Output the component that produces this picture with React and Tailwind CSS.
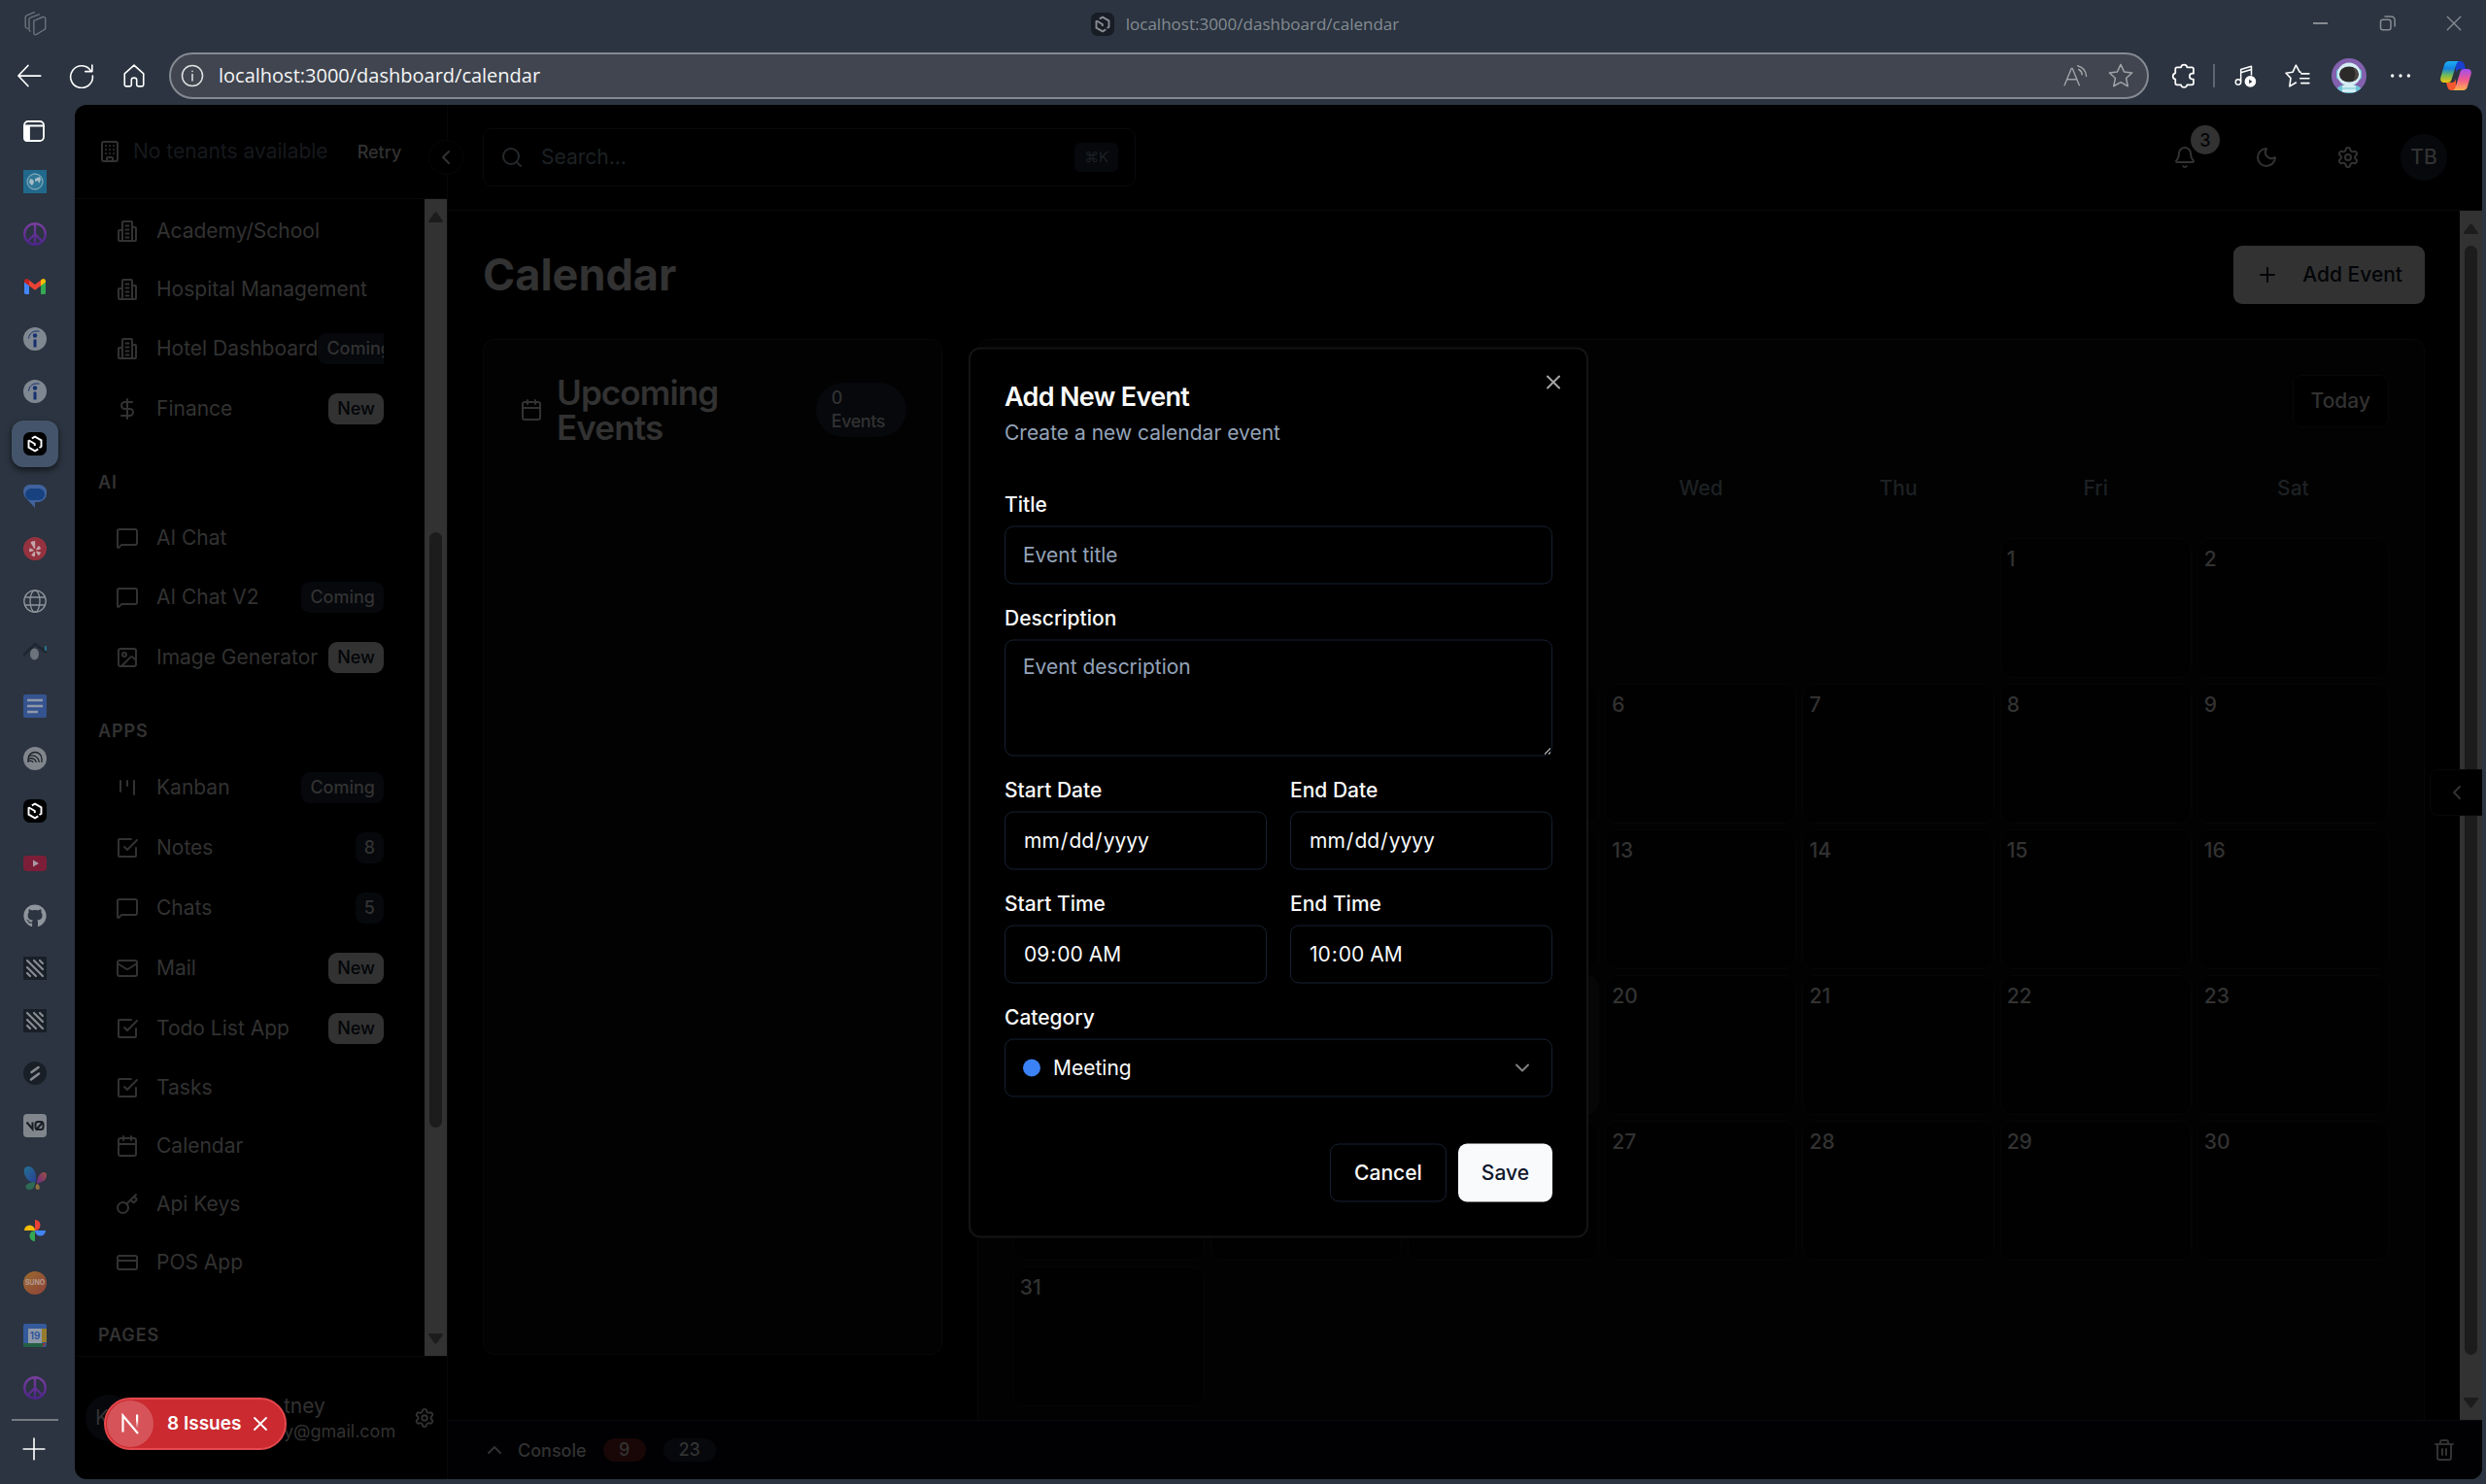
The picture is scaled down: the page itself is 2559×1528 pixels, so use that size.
import React from "react";
import {
  Building, Building2, DollarSign, MessageSquare, Image as ImageIcon, Mail, Calendar, Key, CreditCard,
  Bell, Moon, Settings, Search, ChevronLeft, ChevronDown, ChevronUp, Plus, X, Trash2,
} from "lucide-react";
import { FaYelp, FaGithub } from "react-icons/fa";

/* ---------- browser icons ---------- */

const Line = ({ size = 24, w = 1.5, children, className = "" }) => (
  <svg width={size} height={size} viewBox="0 0 24 24" fill="none" stroke="currentColor" strokeWidth={w} strokeLinecap="round" strokeLinejoin="round" className={className} aria-hidden="true">
    {children}
  </svg>
);

const HexLogo = ({ dim }) => (
  <svg width="24" height="24" viewBox="0 0 24 24" aria-hidden="true">
    <rect width="24" height="24" rx="6.500" fill={dim ? "#171d25" : "#000"} />
    <g fill="none" stroke={dim ? "#878c93" : "#fff"} strokeWidth="1.900">
      <path d="M5.500 8.300v7.300l6.500 3.700 3.300-1.900" />
      <path d="M5.500 8.300l6.300 3.700v2" />
      <path d="M8.800 6.400L12 4.700l6.500 3.700v6.400l-2 1.200" />
    </g>
  </svg>
);

const Peace = () => (
  <svg width="24" height="24" viewBox="0 0 24 24" aria-hidden="true">
    <defs>
      <linearGradient id="peace" gradientUnits="userSpaceOnUse" x1="0" y1="0" x2="0" y2="24">
        <stop offset="0" stopColor="#7a3f9e" />
        <stop offset="1" stopColor="#4a2488" />
      </linearGradient>
    </defs>
    <g fill="none" stroke="url(#peace)" strokeWidth="2.400">
      <circle cx="12" cy="12" r="10.800" />
      <path d="M12 1v22M12 12l-7.600 7.600M12 12l7.600 7.600" />
    </g>
  </svg>
);

const WebTile = () => (
  <svg width="24" height="24" viewBox="0 0 24 24" aria-hidden="true">
    <rect width="24" height="24" fill="#20698d" />
    <circle cx="12" cy="12" r="8" fill="#2d7797" stroke="#7ba2b4" strokeWidth="1.300" />
    <path d="M7 9l3 1 1 3-2 3-3-3zM12 9l5-2 1 3-2 4-1-3-3 1z" fill="#a5bcc6" />
  </svg>
);

const Gmail = () => (
  <svg width="24" height="24" viewBox="0 0 24 24" aria-hidden="true">
    <path d="M1 7v11.500A1.500 1.500 0 0 0 2.500 20H6V10z" fill="#4285f4" />
    <path d="M23 7v11.500a1.500 1.500 0 0 1-1.500 1.500H18V10z" fill="#34a853" />
    <path d="M6 5.500L12 10l6-4.500v5.800l-6 4.500-6-4.500z" fill="#ea4335" />
    <path d="M1 6.500C1 4 3.500 3.200 5.200 4.800L6 5.500v5.800L1 7.600z" fill="#c5221f" />
    <path d="M23 6.500c0-2.500-2.500-3.300-4.200-1.700l-.8.7v5.800l5-3.700z" fill="#fbbc04" />
  </svg>
);

const Indeed = () => (
  <svg width="24" height="24" viewBox="0 0 24 24" aria-hidden="true">
    <circle cx="12" cy="12" r="12" fill="#7f8791" />
    <circle cx="12" cy="8.500" r="2.200" fill="#14306e" />
    <rect x="10.500" y="12.500" width="3" height="8" rx="0.500" fill="#14306e" />
    <path d="M5.500 11.500C6 6.500 10 2.800 16.500 4.200" fill="none" stroke="#14306e" strokeWidth="1" />
  </svg>
);

const Messages = () => (
  <svg width="24" height="24" viewBox="0 0 24 24" aria-hidden="true">
    <path d="M7 0h9a8 8 0 0 1 8 9.500 9 9 0 0 1-9 8.500h-3v6L1.500 12.500C-1.500 7 .5 0 7 0z" fill="#41629d" />
    <rect x="2" y="4" width="20" height="12" rx="6" fill="#17427f" />
  </svg>
);

const Yelp = () => (
  <span className="flex size-6 items-center justify-center rounded-full bg-[#96323f] text-[#c3a5ab]">
    <FaYelp size={16} />
  </span>
);

const Globe = () => (
  <Line className="text-[#8f959c]" w={1.300}>
    <circle cx="12" cy="12" r="11.200" />
    <ellipse cx="12" cy="12" rx="5" ry="11.200" />
    <path d="M1.800 8h20.400M1.800 16h20.400" />
  </Line>
);

const Roof = () => (
  <svg width="24" height="24" viewBox="0 0 24 24" aria-hidden="true">
    <path d="M0 14L12 2l12 9" fill="none" stroke="#1e2731" strokeWidth="2.500" />
    <ellipse cx="11.500" cy="12.500" rx="4.500" ry="6" fill="#6c737b" />
    <rect x="22" y="4" width="2" height="5" fill="#28708a" />
  </svg>
);

const Docs = () => (
  <svg width="24" height="24" viewBox="0 0 24 24" aria-hidden="true">
    <rect width="24" height="24" rx="2" fill="#35538f" />
    <path d="M4 6h16M4 12h16M4 18h11" stroke="#9099a8" strokeWidth="2.600" />
  </svg>
);

const Arcs = () => (
  <svg width="24" height="24" viewBox="0 0 24 24" aria-hidden="true">
    <circle cx="12" cy="12" r="12" fill="#81868d" />
    <g fill="none" stroke="#1a2129" strokeWidth="1.300">
      <path d="M5 16v-3.500a7 7 0 0 1 14 0V16" />
      <path d="M5 9.800c6-2.500 11 1 11.200 6.200" />
      <path d="M5 12.300c4-1.500 8 .5 8.300 3.700" />
      <path d="M5 14.500c2.500-.5 4.500 0 5.200 1.500" />
    </g>
  </svg>
);

const YouTube = () => (
  <svg width="24" height="24" viewBox="0 0 24 24" aria-hidden="true">
    <rect y="4" width="24" height="16" rx="4" fill="#7d1e38" />
    <path d="M10 8.500v7l6-3.500z" fill="#a99aa5" />
  </svg>
);

const Stripes = () => (
  <svg width="24" height="24" viewBox="0 0 24 24" aria-hidden="true">
    <rect width="24" height="24" fill="#181f27" />
    <path d="M4 4l16 16M11 4l9 9M17 4l3 3M4 11l9 9M4 17l3 3" stroke="#878c93" strokeWidth="2.200" strokeLinecap="round" />
  </svg>
);

const Slashes = () => (
  <svg width="24" height="24" viewBox="0 0 24 24" aria-hidden="true">
    <circle cx="12" cy="12" r="12" fill="#181f27" />
    <path d="M8.500 11L15.500 6M8 18.500l8-6" stroke="#878c93" strokeWidth="2.600" strokeLinecap="round" />
  </svg>
);

const VZero = () => (
  <svg width="24" height="24" viewBox="0 0 24 24" aria-hidden="true">
    <rect width="24" height="24" rx="4" fill="#81868d" />
    <path d="M3.500 8.500l6 7v-7M13 16.500l7-8" fill="none" stroke="#171d25" strokeWidth="2" />
    <rect x="12.500" y="8" width="8" height="8" rx="2.500" fill="none" stroke="#171d25" strokeWidth="2" />
  </svg>
);

const Butterfly = () => (
  <svg width="24" height="24" viewBox="0 0 24 24" aria-hidden="true">
    <defs>
      <linearGradient id="wing" x1="0" y1="0" x2="1" y2="1">
        <stop offset="0" stopColor="#237396" />
        <stop offset="1" stopColor="#2a3f91" />
      </linearGradient>
      <linearGradient id="wing2" x1="1" y1="0" x2="0" y2="1">
        <stop offset="0" stopColor="#9a5043" />
        <stop offset="1" stopColor="#6c2a86" />
      </linearGradient>
    </defs>
    <path d="M5 0c6 0 9 7 8 16-6 1-9-2-11-6S0 0 5 0z" fill="url(#wing)" />
    <path d="M24 9c0 6-5 7-10 9 0-6 3-12 7-12 2 0 3 1 3 3z" fill="url(#wing2)" />
    <path d="M12 16c0 5-2 8-6 8s-4-4-3-5c2-2 6-3 9-3z" fill="#2f6a54" />
    <path d="M14 18c3 0 4 6 1 6s-3-4-1-6z" fill="#90703f" />
  </svg>
);

const Photos = () => (
  <svg width="24" height="24" viewBox="0 0 24 24" aria-hidden="true">
    <path d="M12 1a5.500 5.500 0 0 1 0 11z" fill="#ea4335" />
    <path d="M23 12a5.500 5.500 0 0 1-11 0z" fill="#4285f4" />
    <path d="M12 23a5.500 5.500 0 0 1 0-11z" fill="#34a853" />
    <path d="M1 12a5.500 5.500 0 0 1 11 0z" fill="#fbbc04" />
  </svg>
);

const Suno = () => (
  <span className="flex size-6 items-center justify-center rounded-full bg-linear-to-br from-[#9a6a2c] to-[#8d4139] font-['Inter',sans-serif] text-[7px] font-bold text-[#b39a92]">
    SUNO
  </span>
);

const GCal = () => (
  <svg width="24" height="24" viewBox="0 0 24 24" aria-hidden="true">
    <rect width="24" height="24" rx="2" fill="#345a9b" />
    <path d="M19 5h5v14h-5z" fill="#967b2d" />
    <path d="M0 20h20v4H2a2 2 0 0 1-2-2z" fill="#245f42" />
    <path d="M20 20h4l-4 4z" fill="#8e3733" />
    <rect x="5" y="5" width="14" height="15" fill="#8f99a7" />
    <text x="12" y="16" textAnchor="middle" fontSize="10" fontWeight="600" fontFamily="Inter, sans-serif" fill="#2a519b">19</text>
  </svg>
);

const TABS = [
  ["Web", WebTile], ["Peace", Peace], ["Gmail", Gmail], ["Indeed", Indeed], ["Indeed jobs", Indeed],
  ["Dashboard", HexLogo, true], ["Messages", Messages], ["Yelp", Yelp], ["Site", Globe], ["Home", Roof],
  ["Docs", Docs], ["Arcs", Arcs], ["Dashboard 2", HexLogo], ["YouTube", YouTube],
  ["GitHub", () => <FaGithub size={24} className="text-[#8f959c]" />],
  ["Stripes", Stripes], ["Stripes 2", Stripes], ["Slashes", Slashes], ["v0", VZero], ["Copilot designer", Butterfly],
  ["Photos", Photos], ["Suno", Suno], ["Google Calendar", GCal], ["Peace 2", Peace],
];

const Astronaut = () => (
  <svg width="36" height="36" viewBox="0 0 36 36" aria-hidden="true">
    <defs><clipPath id="ava"><circle cx="18" cy="18" r="18" /></clipPath></defs>
    <g clipPath="url(#ava)">
      <rect width="36" height="36" fill="#8361ae" />
      <path d="M4 36c0-6 5-9 14-9s14 3 14 9z" fill="#6cc5d6" />
      <rect x="5" y="11" width="26" height="11" rx="3" fill="#6cc5d6" />
      <circle cx="18" cy="16.500" r="12" fill="#d3edf2" />
      <ellipse cx="18" cy="16.500" rx="10" ry="8" fill="#2c2a29" />
      <path d="M22 9.500c7 2 7 12 0 14 3-4 3-10 0-14z" fill="#4b4643" />
      <rect x="11" y="28" width="14" height="7" rx="1" fill="#d3edf2" />
      <path d="M11 31h14" stroke="#6cc5d6" />
    </g>
  </svg>
);

const Copilot = () => (
  <svg width="34" height="32" viewBox="0 0 34 32" aria-hidden="true">
    <defs>
      <linearGradient id="cpA" x1="0" y1="0" x2="0" y2="1">
        <stop offset="0" stopColor="#1cb0f5" />
        <stop offset=".35" stopColor="#1583e0" />
        <stop offset=".65" stopColor="#6dbb5a" />
        <stop offset="1" stopColor="#f2c50c" />
      </linearGradient>
      <linearGradient id="cpB" x1="0" y1="0" x2="0" y2="1">
        <stop offset="0" stopColor="#a04ff0" />
        <stop offset=".5" stopColor="#f0588f" />
        <stop offset="1" stopColor="#ffb14d" />
      </linearGradient>
    </defs>
    <path d="M17 1h5c2 0 3 1.500 3.500 3l1.500 5h-5c-3 0-4 1-5 4z" fill="#1a3fd0" />
    <path d="M17 31h-5c-2 0-3-1.500-3.500-3L7 23h5c3 0 4-1 5-4z" fill="#f4582f" />
    <path d="M10 1h11c-2 0-3 1.500-3.500 3l-5 16c-.6 2-1.500 3-4 3H5c-3.500 0-4.500-2.500-3.500-6L5 5c1-3 2.500-4 5-4z" fill="url(#cpA)" />
    <path d="M24 31H13c2 0 3-1.500 3.500-3l5-16c.6-2 1.500-3 4-3H29c3.500 0 4.500 2.500 3.500 6L29 27c-1 3-2.500 4-5 4z" fill="url(#cpB)" />
  </svg>
);

const ToolButton = ({ label, className = "", children }) => (
  <button type="button" aria-label={label} className={`flex h-12 shrink-0 items-center justify-center ${className}`}>
    {children}
  </button>
);

function TitleBar() {
  return (
    <div className="flex h-12 shrink-0 items-center text-[#858b92]">
      <div className="flex w-[73px] justify-center">
        <Line size={26} w={1.300} className="text-[#6b737d]">
          <path d="M10 9.500l8.500-3.500q2.500-.5 2.500 2v8.500q0 1-1 1.500l-7.500 4.500q-2.500 1-2.500-1.500z" />
          <path d="M6.500 19.500q-1-.5-1-2V8.500q0-1.500 1.300-2L15 3.500M4 17q-2-.5-2-2V6.500Q2 5 3.300 4.500L10.500 1.500" />
        </Line>
      </div>
      <div className="flex flex-1 items-center justify-center gap-3 pt-[2px] pl-[136px]">
        <HexLogo dim />
        <span className="font-['Open_Sans',sans-serif] text-[17px]">localhost:3000/dashboard/calendar</span>
      </div>
      <div className="flex items-center">
        <button type="button" aria-label="Minimize" className="flex w-[69px] justify-center"><span className="h-[2px] w-[15px] bg-current" /></button>
        <button type="button" aria-label="Restore" className="flex w-[69px] justify-center">
          <Line size={18} w={2}><rect x="2" y="7" width="14" height="14" rx="3" /><path d="M8 2.500h8.500a5 5 0 0 1 5 5V16" /></Line>
        </button>
        <button type="button" aria-label="Close" className="flex w-[67px] justify-center">
          <Line size={18} w={1.800}><path d="M3 3l18 18M21 3L3 21" /></Line>
        </button>
      </div>
    </div>
  );
}

function Toolbar() {
  return (
    <div className="flex h-[60px] shrink-0 items-center pl-[3px] text-white">
      <ToolButton label="Back" className="w-[54px]"><Line size={28} w={1.500}><path d="M22 12H2.500M11 3L2.500 12l8.500 9" /></Line></ToolButton>
      <ToolButton label="Refresh" className="w-[54px]"><Line size={26}><path d="M21 7.500A10.500 10.500 0 1 0 22.500 12M22 2v6h-6.500" /></Line></ToolButton>
      <ToolButton label="Home" className="w-[54px]"><Line size={26}><path d="M12 2l9 8v10.500q0 1.500-1.500 1.500H16q-1.500 0-1.500-1.500V16q0-2-2.500-2t-2.500 2v4.500Q9.500 22 8 22H4.500Q3 22 3 20.500V10z" /></Line></ToolButton>
      <div className="ml-[9px] flex h-12 flex-1 items-center rounded-full border-2 border-[#858a92] bg-[#40454f] pr-1">
        <Line size={26} w={1.400} className="ml-[9px] text-[#e0e1e3]"><circle cx="12" cy="12" r="9.700" /><path d="M12 10.700v6M12 7.600v.2" /></Line>
        <input type="text" aria-label="Address" defaultValue="localhost:3000/dashboard/calendar" className="ml-[14px] min-w-0 flex-1 bg-transparent font-['Open_Sans',sans-serif] text-[20px] text-[#f4f5f6] outline-none" />
        <ToolButton label="Read aloud" className="w-[47px] text-[#9fa3a8]"><Line size={26} w={1.300}><path d="M2 21L8.500 5h1L16 21M4.400 15.500h9.200M15.500 6c2 1 3 3 3.200 5M14.500 2.500c5 1.500 8 5 8.200 10" /></Line></ToolButton>
        <ToolButton label="Favorite" className="w-[47px] text-[#9fa3a8]"><Line size={28} w={1.300}><path d="M12 2l3 6.500 7 .9-5.200 4.800 1.400 7-6.200-3.500-6.200 3.500 1.400-7L2 9.400l7-.9z" /></Line></ToolButton>
      </div>
      <ToolButton label="Extensions" className="ml-2 w-[56px]"><Line size={28} w={1.500}><path d="M6 4.500h3.500a2.700 2.700 0 0 1 5.300 0H19q1.500 0 1.500 1.500v4h-1a2.500 2.500 0 0 0 0 5h1v3.500q0 1.500-1.500 1.500h-4.200a2.700 2.700 0 0 1-5.300 0H6q-1.500 0-1.500-1.500V15a2.700 2.700 0 0 1 0-5.300V6q0-1.500 1.500-1.500z" /></Line></ToolButton>
      <span className="mx-[2px] h-6 w-[2px] bg-[#5d6670]" />
      <ToolButton label="Media" className="w-[58px]">
        <Line size={26} w={1.400}><path d="M8 17V6l10-3v8M8 9l10-3" /><circle cx="5.500" cy="18" r="2.500" /><circle cx="17" cy="17.500" r="4.700" fill="currentColor" /><path d="M15.800 15.500v4l3-2z" fill="#2b3440" stroke="none" /></Line>
      </ToolButton>
      <ToolButton label="Favorites" className="w-[50px]"><Line size={26} w={1.500}><path d="M15 8.500h-1L10.500 2 7.500 8.500 1 9.500l4.500 4.700L4.500 22l6-3.500M15.500 10H23M14.500 14.500H23M15.500 19H23" /></Line></ToolButton>
      <ToolButton label="Profile" className="w-[55px]"><Astronaut /></ToolButton>
      <ToolButton label="More" className="w-[51px]"><Line size={20} w={4}><path d="M2 12h.01M12 12h.01M22 12h.01" /></Line></ToolButton>
      <ToolButton label="Copilot" className="w-[63px]"><Copilot /></ToolButton>
    </div>
  );
}

function TabRail() {
  return (
    <nav aria-label="Tabs" className="flex w-[77px] shrink-0 flex-col items-start pt-px">
      <button type="button" aria-label="Tab actions" className="flex h-[51px] w-[70px] items-center justify-center text-white">
        <Line size={24} w={1.800}><rect x="2" y="2" width="20" height="20" rx="4" /><path d="M2.500 6.500h19" /><path d="M2 7h5v15H5q-3 0-3-3z" fill="currentColor" /></Line>
      </button>
      {TABS.map(([name, Icon, active]) => (
        <button key={name} type="button" aria-label={name} className="flex h-[54px] w-[72px] items-center justify-center">
          <span className={active ? "flex size-12 items-center justify-center rounded-xl bg-[#44546a] shadow-[0_3px_6px_rgba(0,0,0,0.6)]" : "flex size-12 items-center justify-center"}>
            <Icon />
          </span>
        </button>
      ))}
      <span className="mt-[5px] ml-3 h-[2px] w-12 bg-[#747b84]" />
      <button type="button" aria-label="New tab" className="mt-4 flex w-[70px] justify-center text-white"><Line size={26}><path d="M12 2v20M2 12h20" /></Line></button>
    </nav>
  );
}

/* ---------- app shell ---------- */

const Arrow = ({ down }) => (
  <div className="flex h-9 shrink-0 items-center justify-center">
    <svg width="15" height="11" viewBox="0 0 15 11" fill="#1c1c1c" aria-hidden="true">
      {down ? <path d="M1.500 0h12q2 0 1 2L9 9.500q-1.500 2-3 0L.5 2q-1-2 1-2z" /> : <path d="M1.500 11h12q2 0 1-2L9 1.500q-1.500-2-3 0L.5 9q-1 2 1 2z" />}
    </svg>
  </div>
);

const Scrollbar = ({ before, thumb, after }) => (
  <div className="flex w-[23px] shrink-0 flex-col bg-[#323232]" aria-hidden="true">
    <Arrow />
    <div className="flex min-h-0 flex-1 flex-col items-center">
      <div style={{ flexGrow: before }} />
      <div className="w-[13px] rounded-full bg-[#1c1c1c]" style={{ flexGrow: thumb }} />
      <div style={{ flexGrow: after }} />
    </div>
    <Arrow down />
  </div>
);

const CheckSquare = () => (
  <Line w={2}><path d="M22 4L12 14l-3-3" /><path d="M21 12v8a1 1 0 0 1-1 1H4a1 1 0 0 1-1-1V4a1 1 0 0 1 1-1h12" /></Line>
);
const KanbanIcon = () => <Line w={2}><path d="M5 5v11M12 5v5M19 5v14" /></Line>;

const OfficeIcon = () => (
  <Line w={2} className="shrink-0">
    <path d="M7 22V3a1 1 0 0 1 1-1h8a1 1 0 0 1 1 1v19M7 11H4a1 1 0 0 0-1 1v9a1 1 0 0 0 1 1h16a1 1 0 0 0 1-1V9a1 1 0 0 0-1-1h-3M10.500 6.500h3M10.500 10.500h3M10.500 14.500h3M10.500 18.500h3" />
  </Line>
);

const SECTIONS = [
  { items: [
    { icon: OfficeIcon, label: "Academy/School" },
    { icon: OfficeIcon, label: "Hospital Management" },
    { icon: OfficeIcon, label: "Hotel Dashboard", badge: "Coming", tight: true },
    { icon: DollarSign, label: "Finance", badge: "New" },
  ] },
  { title: "AI", items: [
    { icon: MessageSquare, label: "AI Chat" },
    { icon: MessageSquare, label: "AI Chat V2", badge: "Coming" },
    { icon: ImageIcon, label: "Image Generator", badge: "New" },
  ] },
  { title: "APPS", items: [
    { icon: KanbanIcon, label: "Kanban", badge: "Coming" },
    { icon: CheckSquare, label: "Notes", badge: "8" },
    { icon: MessageSquare, label: "Chats", badge: "5" },
    { icon: Mail, label: "Mail", badge: "New" },
    { icon: CheckSquare, label: "Todo List App", badge: "New" },
    { icon: CheckSquare, label: "Tasks" },
    { icon: Calendar, label: "Calendar" },
    { icon: Key, label: "Api Keys" },
    { icon: CreditCard, label: "POS App" },
  ] },
  { title: "PAGES", items: [] },
];

function NavItem({ icon: Icon, label, badge, tight }) {
  return (
    <a href="#" className={`flex items-center overflow-hidden px-[18px] ${badge ? "h-14" : "h-[54px]"}`}>
      <span className="flex min-w-0 flex-1 items-center overflow-hidden">
        <span className="shrink-0"><Icon size={24} strokeWidth={2} /></span>
        <span className="ml-[18px] shrink-0 text-[21px] whitespace-nowrap">{label}</span>
        {badge && (
          <span className={`h-8 shrink-0 rounded-[9px] px-[9px] text-[18px] leading-8 font-medium ${tight ? "" : "ml-auto"} ${badge === "New" ? "bg-[#323232] text-[#030508]" : "bg-[#06080c]"}`}>
            {badge}
          </span>
        )}
      </span>
    </a>
  );
}

function Sidebar() {
  return (
    <aside className="flex w-96 shrink-0 flex-col border-r border-[#080809]">
      <div className="flex h-[97px] shrink-0 items-center border-b border-[#080809] pl-6">
        <Building size={24} />
        <span className="ml-3 text-[21px] text-[#16191d]">No tenants available</span>
        <button type="button" className="ml-[30px] text-[18px] font-medium">Retry</button>
      </div>
      <div className="flex min-h-0 flex-1">
        <nav aria-label="Main" className="min-w-0 flex-1 overflow-hidden px-6 pt-[6px]">
          {SECTIONS.map((s) => (
            <section key={s.title || "top"} className={s.title ? "mt-9" : ""}>
              {s.title && <h2 className="mb-[18px] text-[18px] leading-6 font-semibold tracking-wider">{s.title}</h2>}
              <div className="flex flex-col gap-[6px]">
                {s.items.map((i) => <NavItem key={i.label} {...i} />)}
              </div>
            </section>
          ))}
        </nav>
        <Scrollbar before={307} thumb={613} after={199} />
      </div>
      <div className="flex h-[127px] shrink-0 items-center border-t border-[#080809] pr-3 pl-[11px]">
        <span className="flex size-12 items-center rounded-full bg-[#06080c] pl-[10px] text-[21px]">K</span>
        <span className="flex flex-1 flex-col pl-[156px]">
          <span className="text-[21px] leading-7">tney</span>
          <span className="text-[18px] leading-6">y@gmail.com</span>
        </span>
        <button type="button" aria-label="Account settings"><Settings size={22} /></button>
      </div>
    </aside>
  );
}

function Header() {
  return (
    <header className="flex h-[109px] shrink-0 items-center justify-between border-b border-[#080809] px-9">
      <div className="flex h-[60px] w-[672px] items-center rounded-[9px] border border-[#080a0e] pr-[17px] pl-[17px] text-[#1d2124]">
        <Search size={24} className="text-[#25282b]" />
        <input type="search" aria-label="Search" placeholder="Search..." className="ml-[18px] min-w-0 flex-1 bg-transparent text-[21px] outline-none placeholder:text-[#1d2124]" />
        <kbd className="rounded-md bg-[#06080c] px-[10px] font-['Inter','DejaVu_Sans',sans-serif] text-[15px] leading-[30px]">⌘K</kbd>
      </div>
      <div className="flex items-center gap-6">
        <button type="button" aria-label="Notifications" className="relative flex size-[60px] items-center justify-center">
          <Bell size={24} />
          <span className="absolute -top-[3px] -right-[6px] flex size-[30px] items-center justify-center rounded-full bg-[#323232] text-[18px] font-medium text-[#030508]">3</span>
        </button>
        <button type="button" aria-label="Theme" className="flex size-[60px] items-center justify-center"><Moon size={24} /></button>
        <button type="button" aria-label="Settings" className="flex size-[60px] items-center justify-center"><Settings size={24} /></button>
        <button type="button" className="flex size-12 items-center justify-center rounded-full bg-[#06080c] text-[21px] font-medium">TB</button>
      </div>
    </header>
  );
}

const DAYS = ["Sun", "Mon", "Tue", "Wed", "Thu", "Fri", "Sat"];

function CalendarPage() {
  return (
    <div className="min-w-0 flex-1 overflow-hidden px-9 pt-9">
      <div className="flex items-center justify-between">
        <h1 className="text-[45px] leading-[54px] font-bold">Calendar</h1>
        <button type="button" className="flex h-[60px] items-center rounded-[9px] bg-[#323232] px-[23px] text-[21px] font-medium text-[#030508]">
          <Plus size={24} className="mr-6" />
          Add Event
        </button>
      </div>
      <div className="mt-9 grid grid-cols-4 items-start gap-9">
        <section className="col-span-1 flex h-[1046px] items-start rounded-xl border border-[#080809] bg-[#020202] p-9">
          <Calendar size={24} className="my-6 ml-px shrink-0" />
          <h2 className="ml-[14px] flex-1 text-[35px] leading-9 font-semibold tracking-tight">Upcoming Events</h2>
          <span className="mt-2 ml-9 w-[93px] rounded-[28px] bg-[#06080c] px-4 py-1 text-[18px] leading-6 font-medium tracking-tight">0 Events</span>
        </section>
        <section className="col-span-3 rounded-xl border border-[#080809] bg-[#020202] p-9">
          <div className="flex items-center justify-end">
            <button type="button" className="h-[54px] rounded-[9px] border border-[#080809] bg-black px-[18px] text-[21px] font-medium">Today</button>
          </div>
          <div className="mt-9 grid grid-cols-7 gap-[6px] text-center text-[21px] font-medium text-[#1d2124]">
            {DAYS.map((d) => <div key={d} className="h-[54px] leading-[54px]">{d}</div>)}
          </div>
          <div className="mt-6 mb-9 grid grid-cols-7 gap-[6px]">
            {Array.from({ length: 5 }, (_, i) => <div key={`e${i}`} />)}
            {Array.from({ length: 31 }, (_, i) => (
              <div key={i} className={`h-36 rounded-xl border border-[#060607] p-[6px] text-[21px] leading-[30px] font-medium ${i === 18 ? "bg-[#060606]" : "bg-[#010101]"}`}>
                {i + 1}
              </div>
            ))}
          </div>
        </section>
      </div>
    </div>
  );
}

function ConsoleBar() {
  return (
    <footer className="flex h-[61px] shrink-0 items-center border-t border-[#07080b] bg-[#010103] pr-[27px] pl-9 text-[18px] font-medium">
      <ChevronUp size={24} />
      <span className="ml-3">Console</span>
      <span className="ml-[17px] w-11 rounded-full bg-[#190606] text-center leading-6">9</span>
      <span className="ml-[18px] w-[54px] rounded-full bg-[#06080c] text-center leading-6">23</span>
      <button type="button" aria-label="Clear console" className="ml-auto"><Trash2 size={24} /></button>
    </footer>
  );
}

/* ---------- dialog ---------- */

const FIELD = "h-[60px] w-full rounded-[9px] border border-[#172132] bg-black px-[18px] text-[21px] text-[#f8fafc] outline-none";

const Field = ({ id, label, children }) => (
  <div className="flex flex-col gap-3">
    <label htmlFor={id} className="text-[21px] leading-[21px] font-medium">{label}</label>
    {children}
  </div>
);

function EventDialog() {
  return (
    <form role="dialog" aria-labelledby="dlg-title" className="absolute top-1/2 left-1/2 w-[638px] -translate-x-1/2 -translate-y-1/2 rounded-xl border-2 border-[#141414] bg-black p-[35px] text-[#fafafa]">
      <button type="button" aria-label="Close" className="absolute top-[22px] right-[22px] text-[#a6a6a6]"><X size={24} /></button>
      <h2 id="dlg-title" className="text-[27px] leading-[27px] font-semibold tracking-tight">Add New Event</h2>
      <p className="mt-[9px] text-[21px] leading-[30px] text-[#94a3b8]">Create a new calendar event</p>
      <div className="mt-12 mb-12 flex flex-col gap-6">
        <Field id="title" label="Title"><input id="title" type="text" placeholder="Event title" className={`${FIELD} placeholder:text-[#94a3b8]`} /></Field>
        <Field id="desc" label="Description">
          <textarea id="desc" placeholder="Event description" className="block h-[120px] w-full rounded-[9px] border border-[#172132] bg-black px-[18px] py-3 text-[21px] leading-[30px] outline-none [color-scheme:dark] placeholder:text-[#94a3b8]" />
        </Field>
        <div className="grid grid-cols-2 gap-6">
          <Field id="sd" label="Start Date"><input id="sd" type="date" className={FIELD} /></Field>
          <Field id="ed" label="End Date"><input id="ed" type="date" className={FIELD} /></Field>
        </div>
        <div className="grid grid-cols-2 gap-6">
          <Field id="st" label="Start Time"><input id="st" type="time" defaultValue="09:00" className={FIELD} /></Field>
          <Field id="et" label="End Time"><input id="et" type="time" defaultValue="10:00" className={FIELD} /></Field>
        </div>
        <Field id="cat" label="Category">
          <div className="relative">
            <select id="cat" defaultValue="Meeting" className="h-[60px] w-full appearance-none rounded-[9px] border border-[#172132] bg-black pl-[49px] text-[21px] outline-none">
              <option>Meeting</option>
            </select>
            <span className="pointer-events-none absolute top-[21px] left-[19px] size-[18px] rounded-full bg-[#3b82f6]" />
            <ChevronDown size={24} className="pointer-events-none absolute top-[18px] right-[19px] text-[#808080]" />
          </div>
        </Field>
      </div>
      <div className="flex justify-end gap-3">
        <button type="button" className="h-[60px] rounded-[9px] border border-[#172132] px-6 text-[21px] font-medium">Cancel</button>
        <button type="submit" className="h-[60px] rounded-[9px] bg-[#f8fafc] px-6 text-[21px] font-medium text-[#0f172a]">Save</button>
      </div>
    </form>
  );
}

function IssuesPill() {
  return (
    <div className="absolute bottom-[30px] left-[30px] flex h-[54px] w-[188px] items-center rounded-full border-2 border-[#e5484d] bg-[#ca2a30] pl-px text-white">
      <span className="flex size-12 items-center justify-center rounded-full bg-[#d65459]">
        <svg width="20" height="22" viewBox="0 0 20 22" fill="none" stroke="#fff" strokeWidth="2.200" aria-hidden="true">
          <defs><linearGradient id="nx" x1="0" y1="0" x2="0" y2="1"><stop offset=".4" stopColor="#fff" /><stop offset="1" stopColor="#fff" stopOpacity="0" /></linearGradient></defs>
          <path d="M2.500 19.500V2.500L18 21" />
          <rect x="16" y="1.500" width="2.200" height="14" fill="url(#nx)" stroke="none" />
        </svg>
      </span>
      <button type="button" className="ml-[14px] text-[19px] font-semibold whitespace-nowrap">8 Issues</button>
      <button type="button" aria-label="Dismiss issues" className="ml-2"><Line size={24} w={1.800}><path d="M6 6l12 12M18 6L6 18" /></Line></button>
    </div>
  );
}

export default function App() {
  return (
    <div className="flex h-screen flex-col overflow-hidden bg-[#2b3440]">
      <TitleBar />
      <Toolbar />
      <div className="flex min-h-0 flex-1">
        <TabRail />
        <div className="relative mr-1 mb-[5px] flex min-w-0 flex-1 overflow-hidden rounded-xl bg-black font-['Inter',sans-serif] text-[#323232]">
          <Sidebar />
          <div className="flex min-w-0 flex-1 flex-col">
            <Header />
            <main className="flex min-h-0 flex-1">
              <CalendarPage />
              <Scrollbar before={0} thumb={1143} after={31} />
            </main>
            <ConsoleBar />
          </div>
          <button type="button" aria-label="Collapse sidebar" className="absolute top-9 left-[364px] flex size-9 items-center justify-center rounded-full border border-[#080809] bg-black"><ChevronLeft size={24} /></button>
          <button type="button" aria-label="Open panel" className="absolute top-[684px] right-0 flex h-12 w-[54px] items-center justify-center rounded-l-[9px] border border-r-0 border-[#080809] bg-black"><ChevronLeft size={24} /></button>
          <EventDialog />
          <IssuesPill />
        </div>
      </div>
    </div>
  );
}
